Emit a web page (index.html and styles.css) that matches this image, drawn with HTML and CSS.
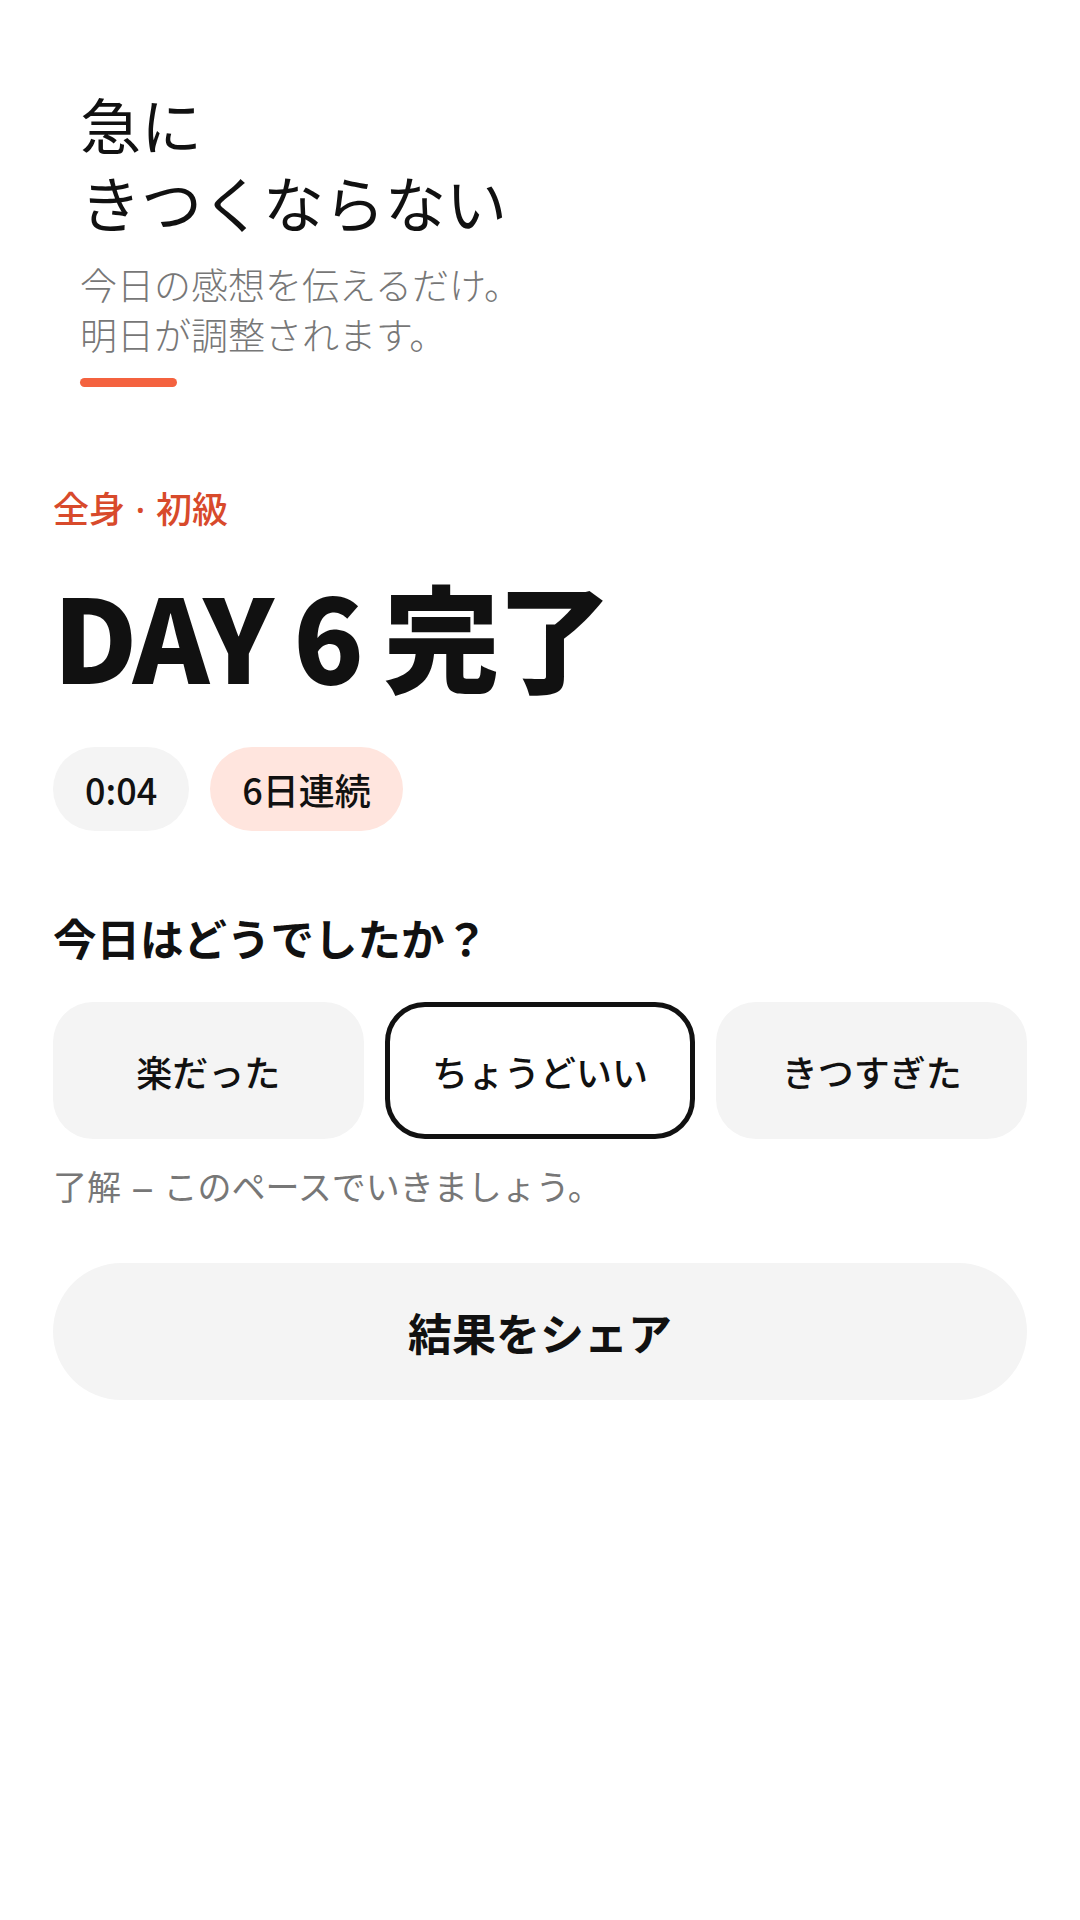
FILE: index.html
```html
<!DOCTYPE html>
<html lang="ja">
<head>
  <meta charset="UTF-8" />
  <meta name="viewport" content="width=device-width, initial-scale=1.0" />
  <title>DAY 6 完了</title>
  <link rel="stylesheet" href="styles.css">
</head>
<body>
  <div class="screen">
    <div class="intro">
      <h2 class="intro-title">急に<br>きつくならない</h2>
      <p class="intro-text">今日の感想を伝えるだけ。<br>明日が調整されます。</p>
      <div class="intro-bar"></div>
    </div>

    <div class="result">
      <div class="tag">全身 <span class="dot">·</span> 初級</div>
      <h1 class="headline">DAY 6 完了</h1>

      <div class="chips">
        <span class="chip">0:04</span>
        <span class="chip streak">6日連続</span>
      </div>

      <h3 class="question">今日はどうでしたか？</h3>
      <div class="choices">
        <button class="choice">楽だった</button>
        <button class="choice selected">ちょうどいい</button>
        <button class="choice">きつすぎた</button>
      </div>
      <p class="choice-note">了解 <span class="dash">–</span> このペースでいきましょう。</p>

      <button class="share-btn">結果をシェア</button>
    </div>
  </div>
</body>
</html>
```

FILE: styles.css
```css
/* Variables */
:root {
  --text: #111111;
  --muted: #777777;
  --accent: #F4623F;
  --accent-dark: #D84A2B;
  --soft-bg: #F4F4F4;
  --pink-bg: #FFE5DE;
}

html, body {
  margin: 0;
  background: #FFFFFF;
  color: var(--text);
  font-family: "Noto Sans CJK JP", "Noto Sans", sans-serif;
}

.screen {
  width: 1080px;
  min-height: 1920px;
}

/* Intro block */
.intro {
  padding: 85px 80px 0;
}
.intro-title {
  margin: 0;
  font-size: 61px;
  line-height: 78px;
  font-weight: 400;
}
.intro-text {
  margin: 18px 0 0;
  font-size: 37px;
  line-height: 50px;
  color: var(--muted);
  font-weight: 300;
}
.intro-bar {
  width: 97px;
  height: 9px;
  margin-top: 19px;
  border-radius: 5px;
  background: var(--accent);
}

/* Result */
.result {
  padding: 95px 53px 0;
}
.tag {
  font-size: 36px;
  line-height: 50px;
  font-weight: 500;
  color: var(--accent-dark);
}
.tag .dot {
  font-family: "Noto Sans", sans-serif;
  padding: 0 2.5px;
}
.headline {
  margin: 29px 0 0;
  font-size: 116px;
  line-height: 139px;
  font-weight: 900;
  letter-spacing: -3.5px;
}

.chips {
  display: flex;
  gap: 21px;
  margin-top: 44px;
}
.chip {
  display: inline-flex;
  align-items: center;
  height: 84px;
  padding: 0 32px;
  border-radius: 42px;
  background: var(--soft-bg);
  font-size: 36px;
  font-weight: 500;
}
.chip.streak {
  background: var(--pink-bg);
}

.question {
  margin: 77px 0 0;
  font-size: 43.5px;
  line-height: 59px;
  font-weight: 700;
}

.choices {
  display: grid;
  grid-template-columns: repeat(3, 1fr);
  gap: 21px;
  margin-top: 35px;
}
.choice {
  height: 137px;
  border: none;
  border-radius: 40px;
  background: var(--soft-bg);
  color: var(--text);
  font-family: inherit;
  font-size: 36px;
  font-weight: 500;
  padding: 0;
}
.choice.selected {
  background: #FFFFFF;
  border: 5px solid var(--text);
}

.choice-note {
  margin: 23px 0 0;
  font-size: 34px;
  line-height: 48px;
  color: var(--muted);
}
.choice-note .dash {
  display: inline-block;
  width: 0.8em;
  text-align: center;
  font-family: "Noto Sans", sans-serif;
  transform: scaleX(1.3);
}

.share-btn {
  display: block;
  width: 100%;
  height: 137px;
  margin-top: 52px;
  border: none;
  border-radius: 69px;
  background: var(--soft-bg);
  color: var(--text);
  font-family: inherit;
  font-size: 44px;
  font-weight: 700;
}
```
